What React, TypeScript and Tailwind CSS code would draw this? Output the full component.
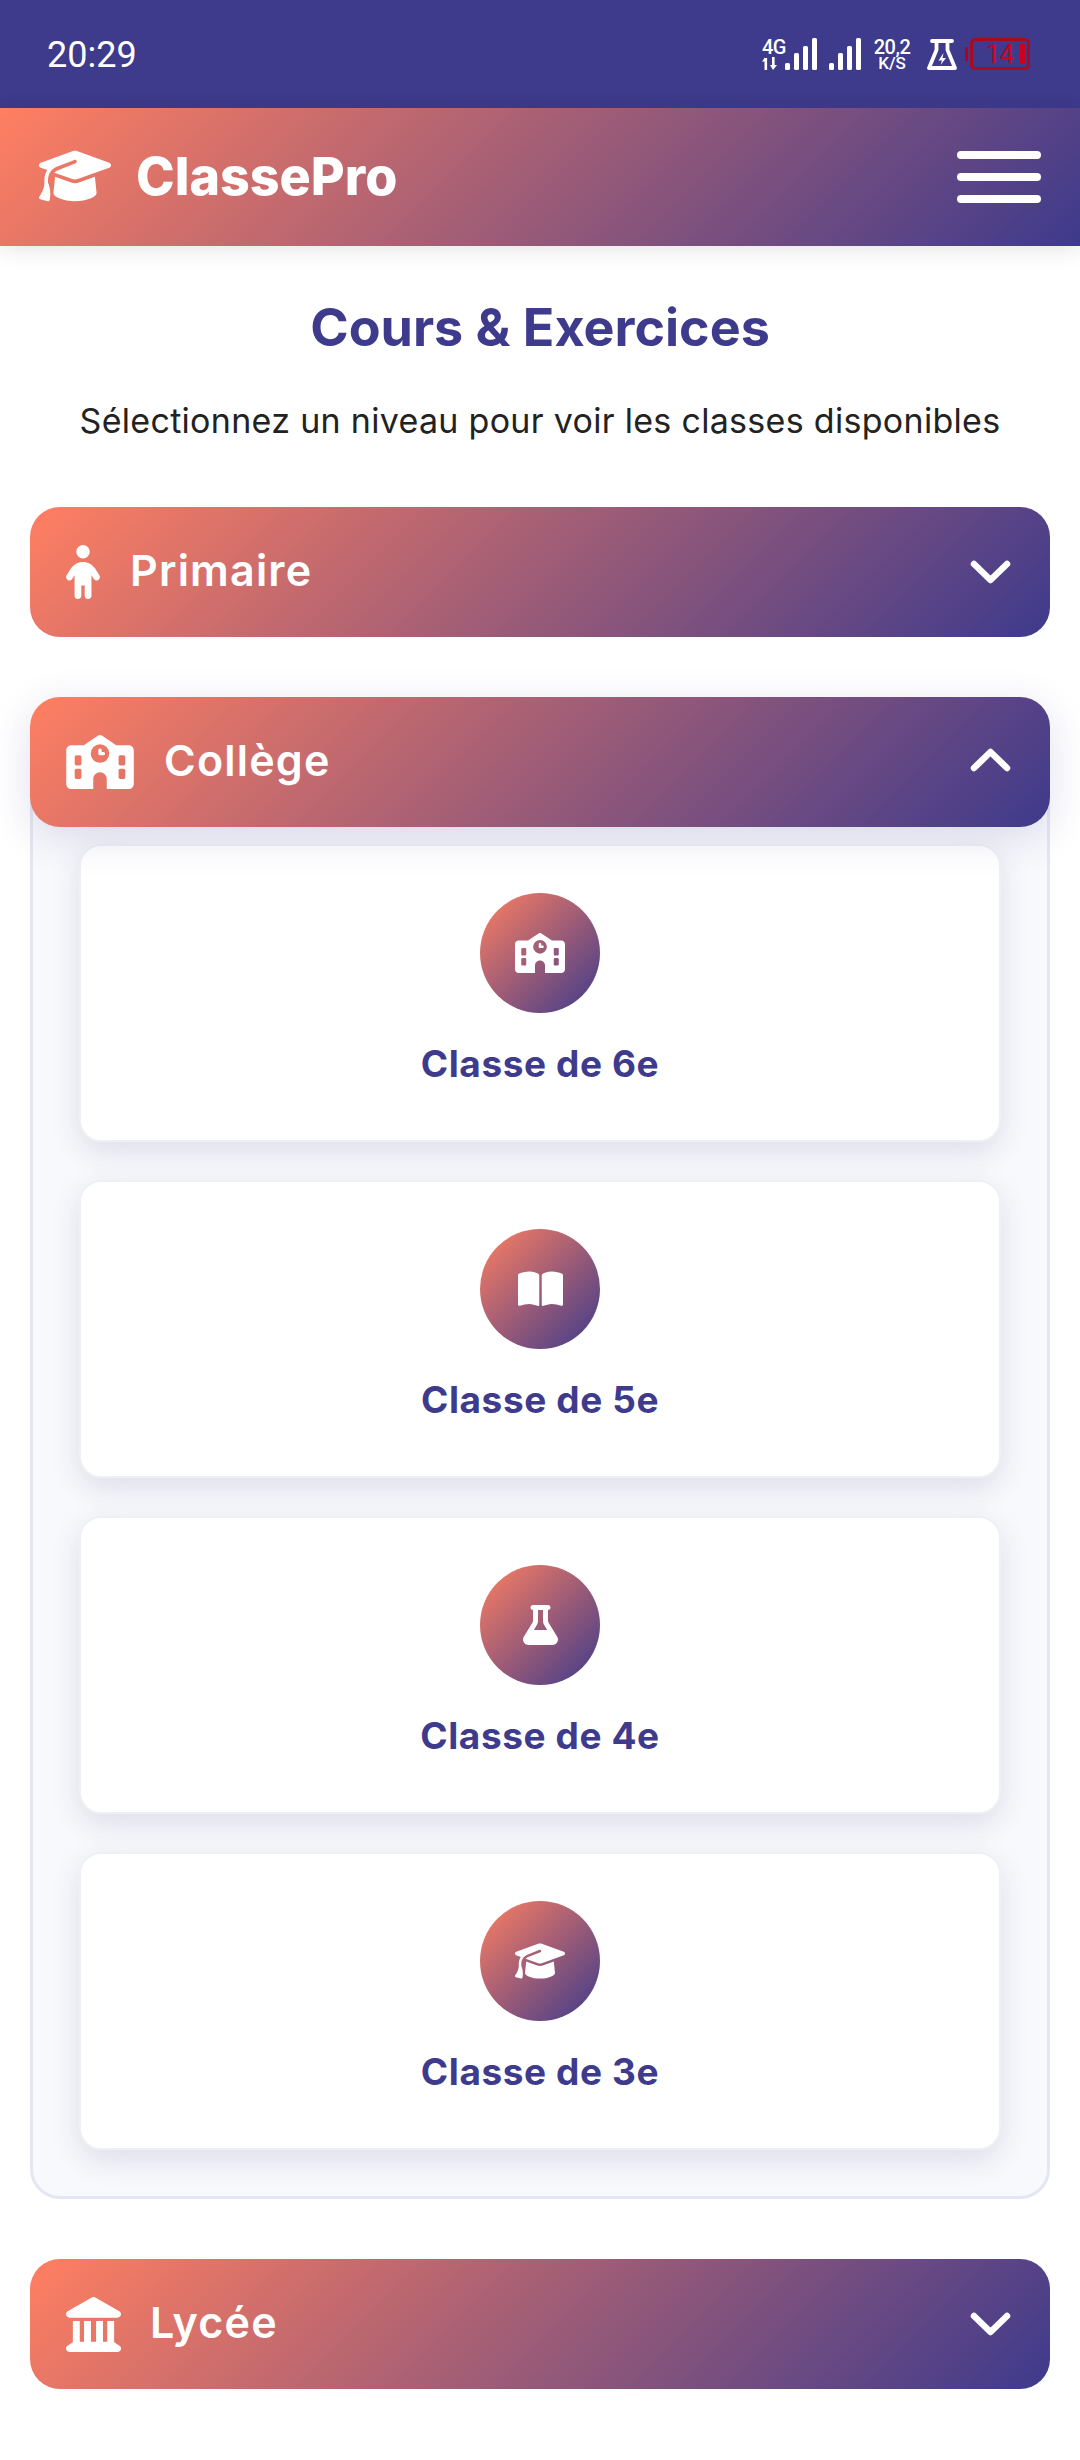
import { FaGraduationCap, FaChild, FaSchool, FaBookOpen, FaFlask, FaLandmark } from "react-icons/fa6";
import type { ReactNode } from "react";

function Bars() {
  return (
    <svg width="32" height="32" viewBox="0 0 32 32" fill="#fff">
      <rect x="0" y="25" width="5" height="7" rx="1.5" />
      <rect x="9" y="15" width="5" height="17" rx="1.5" />
      <rect x="18" y="8" width="5" height="24" rx="1.5" />
      <rect x="27" y="0" width="5" height="32" rx="1.5" />
    </svg>
  );
}

function StatusBar() {
  return (
    <div className="h-[108px] bg-[#3e3a8c] flex items-center justify-between pl-[47px] pr-[50px] text-white font-['Roboto',sans-serif]">
      <span className="text-[36px] font-normal leading-none mt-[2px]">20:29</span>
      <div className="flex items-center">
        <div className="flex flex-col items-start w-[23px] leading-none">
          <span className="text-[20px] font-medium leading-[19px] tracking-[-0.6px]">4G</span>
          <svg width="16" height="13" viewBox="0 0 16 13" fill="#fff">
            <rect x="2.5" y="1" width="2.6" height="12" />
            <rect x="10" y="0" width="2.6" height="11" />
            <path d="M0 4.5 L3 0.5 L3 4.5Z M8 8 H15 L11 13Z" />
          </svg>
        </div>
        <Bars />
        <div className="w-[12px]" />
        <Bars />
        <div className="flex flex-col items-center w-[38px] ml-[12px] leading-none font-medium">
          <span className="text-[20px] leading-[18px] tracking-[-0.5px]">20,2</span>
          <span className="text-[17px] leading-[15px] font-medium">K/S</span>
        </div>
        <svg width="30" height="31" viewBox="0 0 30 31" className="ml-[16px]" fill="none" stroke="#fff" strokeWidth="3.8" strokeLinejoin="round" strokeLinecap="round">
          <path d="M5 2 H25 M9.5 2 V11 L2 29 H28 L20.5 11 V2" />
          <path d="M16.5 14 L11.5 21.5 H15 L13.5 26 L19 19 H15.5 Z" fill="#fff" stroke="none" />
        </svg>
        <div className="w-[3px] h-[14px] bg-[#b3001b] rounded-l-[1px] ml-[8px] mr-[2px]" />
        <div className="w-[60px] h-[32px] border-[3px] border-[#a80a22] rounded-[5px] flex items-center justify-end pr-[2px] gap-[6px]">
          <span className="text-[#d00018] text-[25px] font-normal leading-none">14</span>
          <div className="w-[5px] h-[20px] bg-[#d00018] rounded-[1px]" />
        </div>
      </div>
    </div>
  );
}

function Header() {
  return (
    <header className="h-[138px] bg-[linear-gradient(135deg,#ff7f61,#3e3a8c)] shadow-[0_4px_20px_rgba(0,0,0,0.1)] flex items-center justify-between pl-[39px] pr-[39px] relative">
      <div className="flex items-center gap-[25px]">
        <FaGraduationCap className="text-white w-[72px] h-[58px] mt-[-2px]" />
        <span className="text-white font-['Inter',sans-serif] font-extrabold text-[52px] leading-none">ClassePro</span>
      </div>
      <div className="flex flex-col gap-[14px]">
        <div className="w-[84px] h-[8px] bg-white rounded-full" />
        <div className="w-[84px] h-[8px] bg-white rounded-full" />
        <div className="w-[84px] h-[8px] bg-white rounded-full" />
      </div>
    </header>
  );
}

function Chevron({ up }: { up?: boolean }) {
  return (
    <svg width="41" height="24" viewBox="0 0 41 24" fill="none" stroke="#fff" strokeWidth="6.5" strokeLinecap="round" strokeLinejoin="round" className={up ? "mt-[-4px]" : ""}>
      <path d={up ? "M4 20 L20.5 4 L37 20" : "M4 4 L20.5 20 L37 4"} />
    </svg>
  );
}

function LevelHead({ icon, label, gap, up }: { icon: ReactNode; label: string; gap: string; up?: boolean }) {
  return (
    <div className={`h-[130px] rounded-[30px] bg-[linear-gradient(135deg,#ff7f61,#3e3a8c)] flex items-center justify-between pl-[36px] pr-[39px] relative z-10 ${up ? "shadow-[0_10px_40px_rgba(62,58,140,0.16)]" : ""}`}>
      <div className={`flex items-center ${gap}`}>
        {icon}
        <span className="text-white font-['Inter',sans-serif] font-semibold text-[43px] leading-none tracking-[1.2px] mt-[-3px]">{label}</span>
      </div>
      <Chevron up={up} />
    </div>
  );
}

function ClassCard({ icon, label }: { icon: ReactNode; label: string }) {
  return (
    <div className="h-[298px] rounded-[22px] bg-white border-2 border-[#eff0f6] shadow-[0_10px_30px_rgba(50,50,100,0.13)] flex flex-col items-center pt-[47px]">
      <div className="w-[120px] h-[120px] rounded-full bg-[linear-gradient(135deg,#ff7f61,#3e3a8c)] flex items-center justify-center">
        {icon}
      </div>
      <span className="mt-[29px] text-[#3e3a8c] font-['Inter',sans-serif] font-bold text-[37px] leading-[44px] tracking-[0.6px]">{label}</span>
    </div>
  );
}

export default function App() {
  return (
    <div className="w-[1080px] h-[2460px] bg-white overflow-hidden">
      <StatusBar />
      <Header />
      <main className="px-[30px]">
        <h1 className="mt-[51px] text-center text-[#3e3a8c] font-['Inter',sans-serif] font-bold text-[52px] leading-[62px]">Cours &amp; Exercices</h1>
        <p className="mt-[39px] text-center text-[#222] font-['Inter',sans-serif] text-[34px] leading-[46px] tracking-[0.3px]">Sélectionnez un niveau pour voir les classes disponibles</p>
        <div className="mt-[63px]">
          <LevelHead icon={<FaChild className="text-white w-[34px] h-[54px]" />} label="Primaire" gap="gap-[30px]" />
        </div>
        <div className="mt-[60px]">
          <LevelHead up icon={<FaSchool className="text-white w-[68px] h-[54px]" />} label="Collège" gap="gap-[30px]" />
          <div className="mt-[-30px] pt-[44px] pb-[46px] px-[46px] rounded-b-[30px] bg-[#f8f9fc] border-[3px] border-[#e5e6f1] flex flex-col gap-[38px]">
            <ClassCard icon={<FaSchool className="text-white w-[50px] h-[40px]" />} label="Classe de 6e" />
            <ClassCard icon={<FaBookOpen className="text-white w-[45px] h-[40px]" />} label="Classe de 5e" />
            <ClassCard icon={<FaFlask className="text-white w-[35px] h-[40px]" />} label="Classe de 4e" />
            <ClassCard icon={<FaGraduationCap className="text-white w-[50px] h-[40px]" />} label="Classe de 3e" />
          </div>
        </div>
        <div className="mt-[60px]">
          <LevelHead icon={<FaLandmark className="text-white w-[55px] h-[55px]" />} label="Lycée" gap="gap-[29px]" />
        </div>
      </main>
    </div>
  );
}
